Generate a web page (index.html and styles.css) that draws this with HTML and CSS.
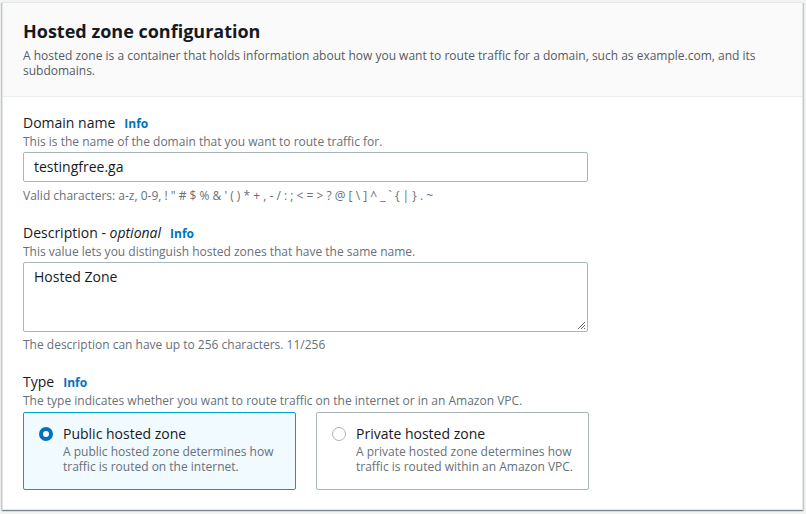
FILE: index.html
```html
<!DOCTYPE html>
<html>
<head>
<meta charset="utf-8">
<link rel="stylesheet" href="styles.css">
</head>
<body>
<div class="card">
  <div class="card-header">
    <h2 class="title">Hosted zone configuration</h2>
    <p class="header-desc">A hosted zone is a container that holds information about how you want to route traffic for a domain, such as example.com, and its subdomains.</p>
  </div>
  <div class="card-body">
    <div class="field">
      <div class="label-row"><span class="label">Domain name</span><a class="info">Info</a></div>
      <div class="helper">This is the name of the domain that you want to route traffic for.</div>
      <div class="input">testingfree.ga</div>
      <div class="constraint">Valid characters: a-z, 0-9, ! " # $ % &amp; ' ( ) * + , - / : ; &lt; = &gt; ? @ [ \ ] ^ _ ` { | } . ~</div>
    </div>
    <div class="field">
      <div class="label-row"><span class="label">Description - <i>optional</i></span><a class="info">Info</a></div>
      <div class="helper">This value lets you distinguish hosted zones that have the same name.</div>
      <div class="textarea">Hosted Zone
        <svg class="grip" width="10" height="10" viewBox="0 0 10 10"><path d="M9 2L2 9M9 5L5 9M9 8L8 9" stroke="#666" stroke-width="1"/></svg>
      </div>
      <div class="constraint tight">The description can have up to 256 characters. 11/256</div>
    </div>
    <div class="field">
      <div class="label-row"><span class="label">Type</span><a class="info">Info</a></div>
      <div class="helper">The type indicates whether you want to route traffic on the internet or in an Amazon VPC.</div>
      <div class="tiles">
        <div class="tile selected">
          <span class="radio checked"></span>
          <div class="tile-text">
            <div class="tile-title">Public hosted zone</div>
            <div class="tile-desc">A public hosted zone determines how traffic is routed on the internet.</div>
          </div>
        </div>
        <div class="tile">
          <span class="radio"></span>
          <div class="tile-text">
            <div class="tile-title">Private hosted zone</div>
            <div class="tile-desc">A private hosted zone determines how traffic is routed within an Amazon VPC.</div>
          </div>
        </div>
      </div>
    </div>
  </div>
</div>
</body>
</html>
```
FILE: styles.css
```css
* { box-sizing: border-box; }
html, body { margin: 0; }
body {
  background: #f2f3f3;
  padding: 2px 3px 0 2px;
  font-family: "Open Sans", "Noto Sans", sans-serif;
  color: #16191f;
  height: 514px;
  overflow: hidden;
}
.card {
  background: #fff;
  border: 1px solid #e4e7e7;
  box-shadow: 0 1px 1px 0 rgba(0,28,36,.3), 1px 1px 1px 0 rgba(0,28,36,.15), -1px 1px 1px 0 rgba(0,28,36,.15);
  height: 508px;
}
.card-header {
  background: #fafafa;
  border-bottom: 1px solid #eaeded;
  padding: 16px 20px 12px;
  height: 94px;
}
.title {
  margin: 0;
  font-size: 18px;
  line-height: 24px;
  font-weight: 700;
}
.header-desc {
  margin: 5px 0 0;
  font-size: 12px;
  line-height: 15px;
  color: #545b64;
  max-width: 750px;
}
.card-body {
  padding: 16px 20px 0;
}
.field { margin-bottom: 19px; }
.label-row {
  display: flex;
  align-items: baseline;
  gap: 9px;
  line-height: 20px;
}
.label { font-size: 14px; }
.label i { font-style: italic; }
.info {
  font-size: 12px;
  font-weight: 700;
  color: #0073bb;
}
.helper {
  font-size: 12px;
  line-height: 16px;
  color: #687078;
}
.input {
  margin-top: 2px;
  width: 565px;
  height: 30px;
  border: 1px solid #aab7b8;
  border-radius: 2px;
  padding: 4px 10px;
  font-size: 14px;
  line-height: 20px;
}
.textarea {
  position: relative;
  margin-top: 2px;
  width: 565px;
  height: 70px;
  border: 1px solid #aab7b8;
  border-radius: 2px;
  padding: 4px 10px;
  font-size: 14px;
  line-height: 20px;
}
.grip { position: absolute; right: 1px; bottom: 1px; }
.constraint {
  margin-top: 6px;
  font-size: 12px;
  line-height: 16px;
  color: #687078;
}
.constraint.tight { margin-top: 5px; }
.tiles {
  display: flex;
  gap: 20px;
  margin-top: 3px;
}
.tile {
  width: 273px;
  height: 78px;
  border: 1px solid #aab7b8;
  border-radius: 2px;
  padding: 11px 14px 11px 15px;
  display: flex;
  gap: 10px;
}
.tile.selected {
  border-color: #00a1c9;
  background: #f1faff;
}
.radio {
  flex: none;
  width: 14px;
  height: 14px;
  margin-top: 3px;
  border-radius: 50%;
  border: 1px solid #aab7b8;
  background: #fff;
}
.radio.checked {
  border: 4px solid #0073bb;
}
.tile-title {
  font-size: 14px;
  line-height: 20px;
}
.tile-desc {
  font-size: 12px;
  line-height: 15px;
  color: #687078;
}
```
